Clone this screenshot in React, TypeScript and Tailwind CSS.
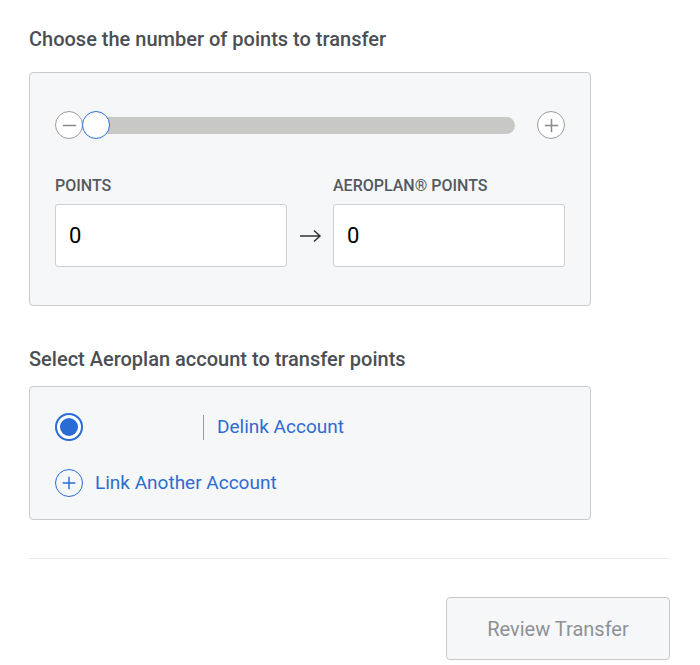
function CircleButton({ sign }: { sign: "minus" | "plus" }) {
  return (
    <button className="flex h-[28px] w-[28px] shrink-0 items-center justify-center rounded-full border border-[#9c9c9c] bg-white">
      <svg viewBox="0 0 20 20" className="h-[19px] w-[19px]" fill="none" stroke="#8a8a8a" strokeWidth="1.6">
        <path d="M3 10h14" />
        {sign === "plus" && <path d="M10 3v14" />}
      </svg>
    </button>
  );
}

function PointsField({ label, value }: { label: string; value: string }) {
  return (
    <div className="flex flex-col">
      <label className="mb-[8px] text-[16px] font-medium uppercase leading-[20px] text-[#55595f]">{label}</label>
      <div className="flex h-[63px] items-center rounded-[3px] border border-[#cfcfcf] bg-white px-[13px] text-[22px] text-black">
        {value}
      </div>
    </div>
  );
}

export default function App() {
  return (
    <div className="min-h-[665px] bg-white font-['Roboto',sans-serif]">
      <div className="w-[670px] pl-[29px] pt-[24px]">
        <h2 className="text-[20px] font-medium leading-[30px] text-[#4b4f55]">
          Choose the number of points to transfer
        </h2>

        <div className="mt-[18px] w-[562px] rounded-[4px] border border-[#cbcbcb] bg-[#f6f7f9] px-[25px] pb-[38px] pt-[38px]">
          <div className="flex items-center">
            <CircleButton sign="minus" />
            <div className="relative z-10 -ml-px h-[28px] w-[28px] shrink-0 rounded-full border border-[#2d6fd6] bg-white" />
            <div className="-ml-[14px] h-[17px] flex-1 rounded-full bg-[#c8c8c6]" />
            <div className="ml-[22px]">
              <CircleButton sign="plus" />
            </div>
          </div>

          <div className="mt-[37px] grid grid-cols-[232px_46px_232px] items-end">
            <PointsField label="Points" value="0" />
            <div className="flex h-[63px] items-center justify-center">
              <svg viewBox="0 0 23 14" className="h-[14px] w-[23px]" fill="none" stroke="#333" strokeWidth="1.5">
                <path d="M1 7h20M15 1.5l6 5.5-6 5.5" />
              </svg>
            </div>
            <PointsField label="Aeroplan® Points" value="0" />
          </div>
        </div>

        <h2 className="mt-[38px] text-[20px] font-medium leading-[30px] text-[#4b4f55]">
          Select Aeroplan account to transfer points
        </h2>

        <div className="mt-[12px] w-[562px] rounded-[4px] border border-[#cbcbcb] bg-[#f6f7f9] px-[25px] pb-[22px] pt-[26px]">
          <div className="flex h-[28px] items-center">
            <span className="flex h-[28px] w-[28px] items-center justify-center rounded-full border-2 border-[#2a6cd5] bg-white">
              <span className="h-[18px] w-[18px] rounded-full bg-[#2a6cd5]" />
            </span>
            <span className="ml-[120px] h-[25px] w-px bg-[#9a9a9a]" />
            <a className="ml-[13px] text-[19px] leading-[24px] text-[#2d6ccf]">Delink Account</a>
          </div>
          <div className="mt-[28px] flex h-[28px] items-center">
            <span className="flex h-[28px] w-[28px] items-center justify-center rounded-full border-[1.5px] border-[#2a6cd5]">
              <svg viewBox="0 0 20 20" className="h-[18px] w-[18px]" fill="none" stroke="#2a6cd5" strokeWidth="1.6">
                <path d="M3 10h14M10 3v14" />
              </svg>
            </span>
            <a className="ml-[12px] text-[19px] leading-[24px] text-[#2d6ccf]">Link Another Account</a>
          </div>
        </div>

        <div className="mt-[38px] h-px w-[641px] bg-[#e9e9e9]" />

        <div className="flex w-[641px] justify-end pt-[38px]">
          <button className="h-[63px] w-[224px] rounded-[4px] border border-[#c8c8c8] bg-[#f6f7f9] text-[20px] text-[#8e9195]">
            Review Transfer
          </button>
        </div>
      </div>
    </div>
  );
}
